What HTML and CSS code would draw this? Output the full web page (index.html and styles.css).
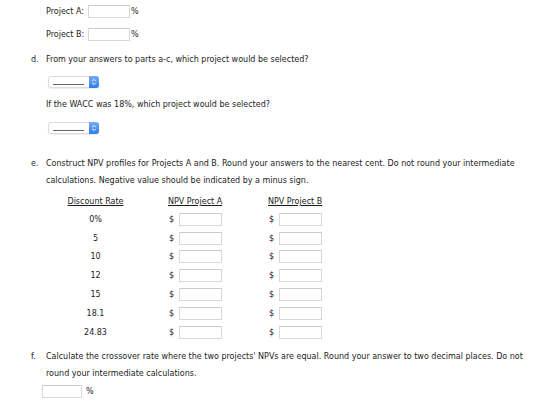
FILE: index.html
```html
<!DOCTYPE html>
<html lang="en">
<head>
    <meta charset="UTF-8">
    <title>NPV Profiles</title>
    <link rel="stylesheet" href="styles.css">
</head>
<body>
    <div class="rates">
        <div class="rate-row">
            <label class="rate-label">Project A:</label>
            <span class="box"></span><span class="unit">%</span>
        </div>
        <div class="rate-row">
            <label class="rate-label">Project B:</label>
            <span class="box"></span><span class="unit">%</span>
        </div>
    </div>

    <div class="part part-d">
        <span class="letter">d.</span>
        <div class="part-body">
            <p>From your answers to parts a-c, which project would be selected?</p>
            <div class="picker">
                <span class="picker-value"></span>
                <span class="picker-btn">
                    <svg width="6" height="8" viewBox="0 0 6 8"><path d="M1.2 3.2 L3 1.4 L4.8 3.2 M1.2 4.8 L3 6.6 L4.8 4.8" fill="none" stroke="#fff" stroke-width="1"/></svg>
                </span>
            </div>
            <p>If the WACC was 18%, which project would be selected?</p>
            <div class="picker picker-last">
                <span class="picker-value"></span>
                <span class="picker-btn">
                    <svg width="6" height="8" viewBox="0 0 6 8"><path d="M1.2 3.2 L3 1.4 L4.8 3.2 M1.2 4.8 L3 6.6 L4.8 4.8" fill="none" stroke="#fff" stroke-width="1"/></svg>
                </span>
            </div>
        </div>
    </div>

    <div class="part part-e">
        <span class="letter">e.</span>
        <div class="part-body">
            <p>Construct NPV profiles for Projects A and B. Round your answers to the nearest cent. Do not round your intermediate calculations. Negative value should be indicated by a minus sign.</p>
            <div class="npv">
                <div class="npv-head col-rate">Discount Rate</div>
                <div class="npv-head col-a">NPV Project A</div>
                <div class="npv-head col-b">NPV Project B</div>

                <div class="col-rate">0%</div>
                <div class="col-a"><span class="cur">$</span><span class="box"></span></div>
                <div class="col-b"><span class="cur">$</span><span class="box"></span></div>

                <div class="col-rate">5</div>
                <div class="col-a"><span class="cur">$</span><span class="box"></span></div>
                <div class="col-b"><span class="cur">$</span><span class="box"></span></div>

                <div class="col-rate">10</div>
                <div class="col-a"><span class="cur">$</span><span class="box"></span></div>
                <div class="col-b"><span class="cur">$</span><span class="box"></span></div>

                <div class="col-rate">12</div>
                <div class="col-a"><span class="cur">$</span><span class="box"></span></div>
                <div class="col-b"><span class="cur">$</span><span class="box"></span></div>

                <div class="col-rate">15</div>
                <div class="col-a"><span class="cur">$</span><span class="box"></span></div>
                <div class="col-b"><span class="cur">$</span><span class="box"></span></div>

                <div class="col-rate">18.1</div>
                <div class="col-a"><span class="cur">$</span><span class="box"></span></div>
                <div class="col-b"><span class="cur">$</span><span class="box"></span></div>

                <div class="col-rate">24.83</div>
                <div class="col-a"><span class="cur">$</span><span class="box"></span></div>
                <div class="col-b"><span class="cur">$</span><span class="box"></span></div>
            </div>
        </div>
    </div>

    <div class="part part-f">
        <span class="letter">f.</span>
        <div class="part-body">
            <p>Calculate the crossover rate where the two projects' NPVs are equal. Round your answer to two decimal places. Do not round your intermediate calculations.</p>
            <div class="answer"><span class="box box-wide"></span><span class="unit">%</span></div>
        </div>
    </div>
</body>
</html>
```

FILE: styles.css
```css
body {
    font-family: "DejaVu Sans", Verdana, sans-serif;
    font-size: 8px;
    color: #1c1c1c;
    background-color: #fff;
    margin: 0;
    padding: 0;
}
p {
    margin: 0;
    line-height: 17px;
}
.box {
    display: inline-block;
    width: 43px;
    height: 13px;
    border: 1px solid #d8d8d8;
    border-top-color: #cbcbcb;
    background: #fff;
    box-sizing: border-box;
}
.unit {
    margin-left: 1px;
}
.rates {
    padding-left: 46px;
}
.rate-row {
    height: 23px;
    display: flex;
    align-items: center;
}
.rate-label {
    width: 42px;
}
.rate-row .box {
    width: 42px;
}
.part {
    display: flex;
    padding-left: 31px;
}
.letter {
    width: 15px;
    line-height: 17px;
    flex-shrink: 0;
}
.part-body {
    width: 490px;
}
.part-d {
    margin-top: 5px;
}
.picker {
    display: flex;
    width: 51px;
    height: 12px;
    margin: 8px 0 8px 2px;
    border: 1px solid #dcdcdc;
    border-radius: 3px;
    box-sizing: border-box;
    box-shadow: 0 1px 1px rgba(0, 0, 0, 0.08);
    background: #fff;
}
.picker-last {
    margin-top: 9px;
    margin-bottom: 0;
}
.picker-value {
    flex: 1;
    position: relative;
}
.picker-value::after {
    content: "";
    position: absolute;
    left: 4px;
    right: 5px;
    bottom: 2px;
    border-bottom: 1px solid #666;
}
.picker-btn {
    width: 10px;
    margin: -1px -1px -1px 0;
    background: linear-gradient(#72adf6, #2f7de9);
    border-radius: 0 3px 3px 0;
    display: flex;
    align-items: center;
    justify-content: center;
}
.part-e {
    margin-top: 21px;
}
.npv {
    display: grid;
    grid-template-columns: 99px 123px 100px;
    grid-auto-rows: 18.8px;
    grid-template-rows: 17px;
    align-items: center;
    margin-top: 4px;
}
.npv-head {
    text-decoration: underline;
}
.col-rate {
    text-align: center;
}
.col-a {
    padding-left: 23px;
}
.col-a, .col-b {
    display: flex;
    align-items: center;
}
.cur {
    width: 11px;
    padding-left: 1px;
    box-sizing: border-box;
}
.part-f {
    margin-top: 6px;
}
.answer {
    display: flex;
    align-items: center;
    margin-top: 3px;
    margin-left: -4px;
}
.box-wide {
    width: 40px;
}
.answer .unit {
    margin-left: 4px;
}
```
